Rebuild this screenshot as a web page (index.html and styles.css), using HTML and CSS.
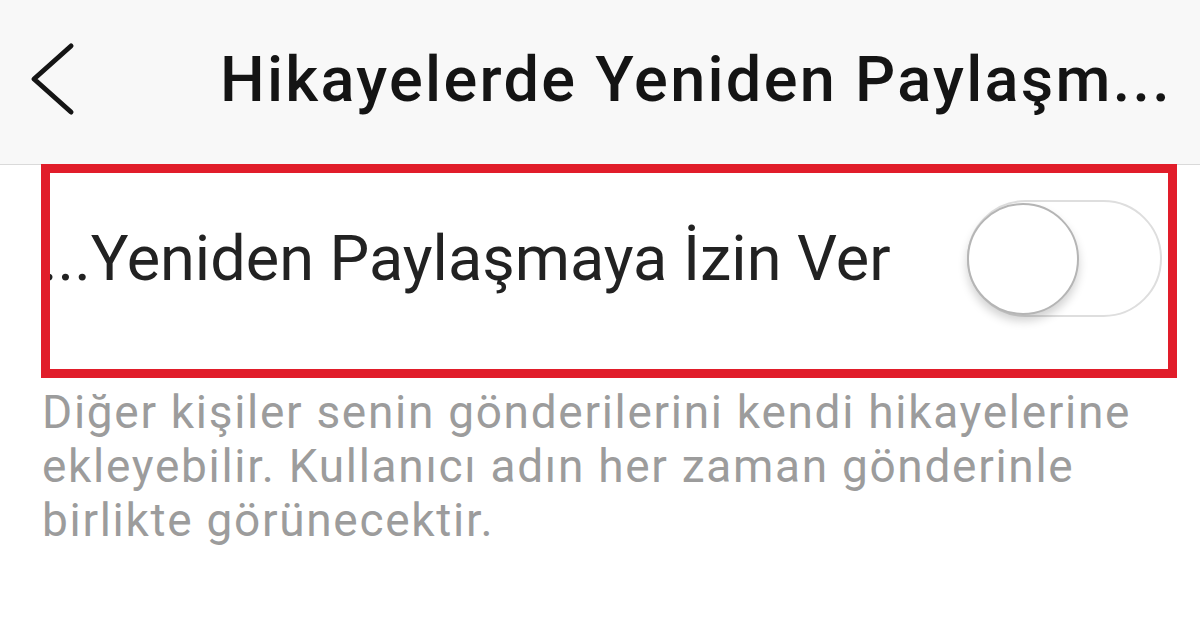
FILE: index.html
```html
<!DOCTYPE html>
<html lang="tr">
<head>
    <meta charset="UTF-8">
    <meta name="viewport" content="width=device-width, initial-scale=1.0">
    <title>Hikayelerde Yeniden Paylaşma</title>
    <link rel="stylesheet" href="styles.css">
</head>
<body>
    <header class="topbar">
        <button class="back-btn" aria-label="Geri">
            <svg width="50" height="80" viewBox="0 0 50 80">
                <polyline points="43,6 6,39 43,72" fill="none" stroke="#151515" stroke-width="5" stroke-linecap="round" stroke-linejoin="round"/>
            </svg>
        </button>
        <h1 class="topbar-title">Hikayelerde Yeniden Paylaşm...</h1>
    </header>

    <main class="settings">
        <div class="setting-row highlighted">
            <span class="setting-label">...Yeniden Paylaşmaya İzin Ver</span>
            <span class="switch">
                <span class="switch-knob"></span>
            </span>
        </div>
        <p class="setting-hint">Diğer kişiler senin gönderilerini kendi hikayelerine ekleyebilir. Kullanıcı adın her zaman gönderinle birlikte görünecektir.</p>
    </main>
</body>
</html>
```

FILE: styles.css
```css
body {
    margin: 0;
    background: #fff;
    font-family: Roboto, "Noto Sans", Arial, sans-serif;
    color: #1a1a1a;
}

.topbar {
    display: flex;
    align-items: center;
    height: 160px;
    padding-bottom: 4px;
    background: #f8f8f8;
    border-bottom: 1px solid #dadada;
}

.back-btn {
    display: flex;
    margin-left: 28px;
    padding: 0;
    border: none;
    background: none;
}

.topbar-title {
    margin: 0 0 0 142px;
    font-size: 63px;
    line-height: 74px;
    font-weight: 500;
    letter-spacing: 2.3px;
    color: #141414;
    white-space: nowrap;
}

.setting-row {
    position: relative;
    display: flex;
    align-items: center;
    justify-content: space-between;
    height: 214px;
    box-sizing: border-box;
    margin: -1px 23px 0 41px;
    padding: 0 15px 26px 0;
}

/* red frame drawn over the row */
.highlighted::after {
    content: '';
    position: absolute;
    inset: 0;
    border: 9px solid #e11d2a;
    pointer-events: none;
}

.setting-label {
    font-size: 63px;
    line-height: 75px;
    color: #222;
    white-space: nowrap;
}

.switch {
    position: relative;
    width: 195px;
    height: 117px;
    box-sizing: border-box;
    border: 2px solid #dedede;
    border-radius: 60px;
    background: #fff;
}

.switch-knob {
    position: absolute;
    left: -2px;
    top: 1px;
    width: 112px;
    height: 112px;
    box-sizing: border-box;
    border-radius: 50%;
    border: 2px solid #b5b5b5;
    background: #fff;
    box-shadow: 0 6px 10px rgba(0, 0, 0, 0.18);
}

.setting-hint {
    margin: 7px 0 0 42px;
    width: 1130px;
    font-size: 46px;
    line-height: 54px;
    letter-spacing: 1.7px;
    color: #9c9c9c;
}
```
